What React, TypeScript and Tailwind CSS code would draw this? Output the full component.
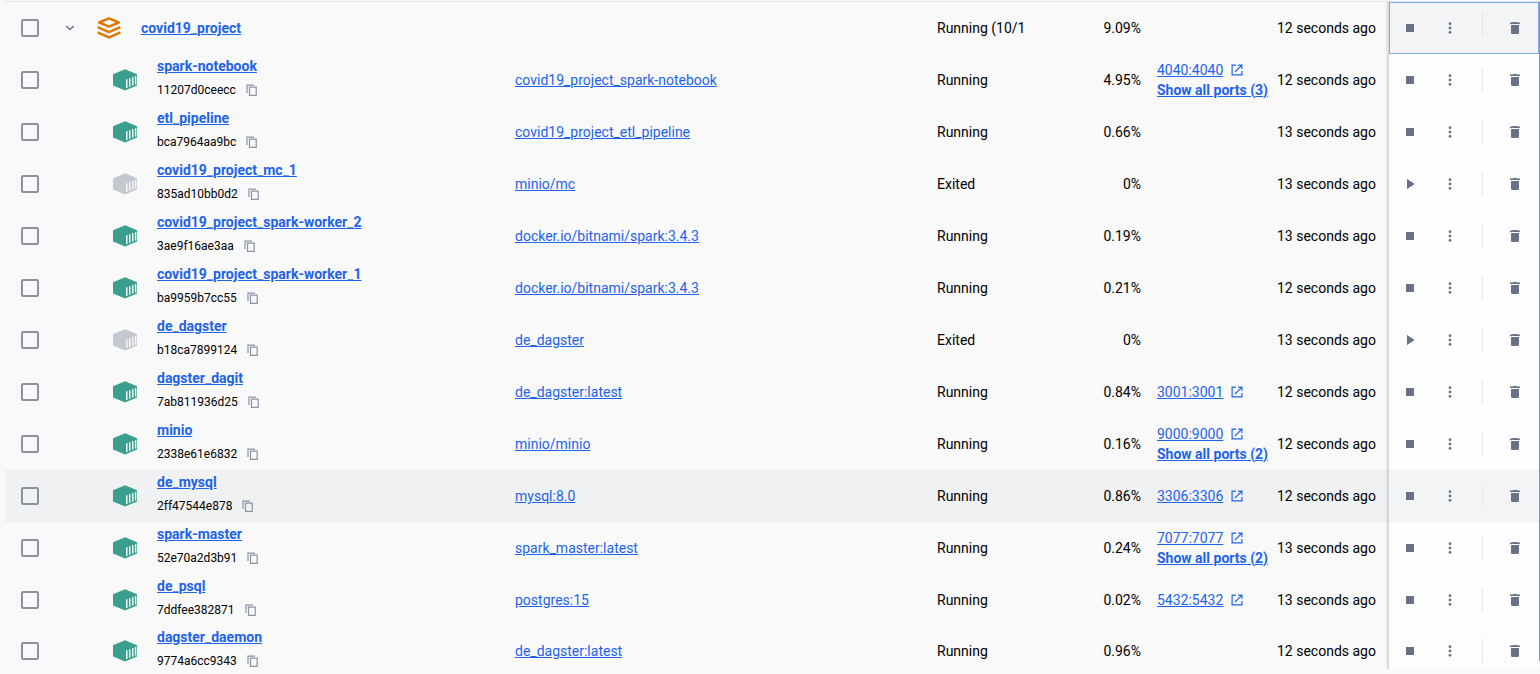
import React from "react";

type Row = {
  name: string;
  id: string;
  image: string;
  status: "Running" | "Exited";
  cpu: string;
  port?: string;
  more?: number;
  started: string;
  active?: boolean;
};

const rows: Row[] = [
  { name: "spark-notebook", id: "11207d0ceecc", image: "covid19_project_spark-notebook", status: "Running", cpu: "4.95%", port: "4040:4040", more: 3, started: "12 seconds ago" },
  { name: "etl_pipeline", id: "bca7964aa9bc", image: "covid19_project_etl_pipeline", status: "Running", cpu: "0.66%", started: "13 seconds ago" },
  { name: "covid19_project_mc_1", id: "835ad10bb0d2", image: "minio/mc", status: "Exited", cpu: "0%", started: "13 seconds ago" },
  { name: "covid19_project_spark-worker_2", id: "3ae9f16ae3aa", image: "docker.io/bitnami/spark:3.4.3", status: "Running", cpu: "0.19%", started: "13 seconds ago" },
  { name: "covid19_project_spark-worker_1", id: "ba9959b7cc55", image: "docker.io/bitnami/spark:3.4.3", status: "Running", cpu: "0.21%", started: "12 seconds ago" },
  { name: "de_dagster", id: "b18ca7899124", image: "de_dagster", status: "Exited", cpu: "0%", started: "13 seconds ago" },
  { name: "dagster_dagit", id: "7ab811936d25", image: "de_dagster:latest", status: "Running", cpu: "0.84%", port: "3001:3001", started: "12 seconds ago" },
  { name: "minio", id: "2338e61e6832", image: "minio/minio", status: "Running", cpu: "0.16%", port: "9000:9000", more: 2, started: "12 seconds ago" },
  { name: "de_mysql", id: "2ff47544e878", image: "mysql:8.0", status: "Running", cpu: "0.86%", port: "3306:3306", started: "12 seconds ago", active: true },
  { name: "spark-master", id: "52e70a2d3b91", image: "spark_master:latest", status: "Running", cpu: "0.24%", port: "7077:7077", more: 2, started: "13 seconds ago" },
  { name: "de_psql", id: "7ddfee382871", image: "postgres:15", status: "Running", cpu: "0.02%", port: "5432:5432", started: "13 seconds ago" },
  { name: "dagster_daemon", id: "9774a6cc9343", image: "de_dagster:latest", status: "Running", cpu: "0.96%", started: "12 seconds ago" },
];

function StackIcon() {
  return (
    <svg width="24" height="24" viewBox="0 0 24 24" fill="none" stroke="#dd7a05" strokeWidth="2.5" strokeLinejoin="round" className="shrink-0">
      <path d="M12 2.3 21.8 6.5 12 10.7 2.2 6.5Z" />
      <path d="M.6 11.2 12 16.1 23.4 11.2" />
      <path d="M.6 16.4 12 21.4 23.4 16.4" />
    </svg>
  );
}

function ContainerIcon({ running }: { running: boolean }) {
  return (
    <svg width="24" height="24" viewBox="0 0 24 24" className="shrink-0">
      <path d="M12 1.2 24 6.2V17.6L12 22.6 0 17.6V6.2Z" fill={running ? "#3aa08d" : "#c4c8d1"} />
      <path d="M13.8 11.2V20M16.8 10.2V18.8M19.8 9.1V17.6M22.6 8V16.4" stroke="#f9f9fa" strokeWidth="1.4" />
    </svg>
  );
}

function CopyIcon() {
  return (
    <svg width="12" height="12" viewBox="0 0 12 12" fill="none" stroke="#8993a5" strokeWidth="1.2">
      <path d="M1 9V1.2H8" />
      <path d="M3.5 3.2H10.2V11.4H3.5Z" />
    </svg>
  );
}

function OpenIcon() {
  return (
    <svg width="12" height="12" viewBox="0 0 12 12" fill="none" stroke="#1d63ed" strokeWidth="1.2" className="shrink-0">
      <path d="M5 1.1H1.1V10.9H10.9V7" />
      <path d="M7 1.1H10.9V5M10.6 1.4 4 8" />
    </svg>
  );
}

function Actions({ name, running, group }: { name: string; running: boolean; group?: boolean }) {
  const button = "flex size-8 items-center justify-center";
  return (
    <div className="flex h-8 items-center gap-2 pl-[5px]">
      <button type="button" aria-label={(running ? "Stop " : "Start ") + name} className={button}>
        <svg width="8" height="10" viewBox="0 0 8 10" fill="#677285">
          {running ? <path d="M0 1H8V9H0Z" /> : <path d="M1 0 8.6 5 1 10Z" />}
        </svg>
      </button>
      <button type="button" aria-label={"More actions for " + name} className={button}>
        <svg width="4" height="12" viewBox="0 0 4 12" fill="#677285">
          <circle cx="2" cy="1.7" r="1.4" />
          <circle cx="2" cy="6" r="1.4" />
          <circle cx="2" cy="10.3" r="1.4" />
        </svg>
      </button>
      <span className={group ? "mx-2 h-6 w-px self-start bg-[#e1e3e6]" : "mx-2 h-6 w-px bg-[#e7e8eb]"} />
      <button type="button" aria-label={"Delete " + name} className={button}>
        <svg width="10" height="12" viewBox="0 0 10 12" fill="#677285">
          <path d="M3 0H7L7.6.6H10V2H0V.6H2.4ZM1 3H9V10.8Q9 12 7.8 12H2.2Q1 12 1 10.8Z" />
        </svg>
      </button>
    </div>
  );
}

function Check({ name }: { name: string }) {
  return (
    <input
      type="checkbox"
      aria-label={"Select " + name}
      className="mx-auto block size-[18px] appearance-none rounded-xs border-2 border-[#8993a5] checked:bg-[#8993a5]"
    />
  );
}

const pinned =
  "relative p-0 before:absolute before:inset-y-0 before:right-full before:w-1 before:bg-linear-to-l before:from-black/15 before:to-transparent ";

export default function App() {
  return (
    <div className="h-screen overflow-hidden bg-[#f9f9fa] pt-px pb-[5px] pl-[5px] font-['Roboto',sans-serif] text-sm leading-5 text-black">
      <div className="flex h-full overflow-hidden border-t border-[#e1e2e4]">
        <table className="w-full table-fixed border-collapse">
          <colgroup>
            <col className="w-[50px]" />
            <col className="w-[30px]" />
            <col />
            <col />
            <col className="w-[100px]" />
            <col className="w-[120px]" />
            <col className="w-[120px]" />
            <col className="w-[120px]" />
            <col className="w-[150px]" />
          </colgroup>
          <tbody>
            <tr className="h-[52px]">
              <td className="p-0"><Check name="covid19_project" /></td>
              <td className="p-0">
                <button type="button" aria-label="Collapse covid19_project" className="mx-auto flex size-6 items-center justify-center">
                  <svg width="10" height="6" viewBox="0 0 10 6" fill="none" stroke="#677285" strokeWidth="1.4">
                    <path d="M1.2 1 5 4.6 8.8 1" />
                  </svg>
                </button>
              </td>
              <td className="p-0 pl-3">
                <div className="flex items-center gap-5">
                  <StackIcon />
                  <a href="#" className="font-bold text-[#1d63ed] underline">covid19_project</a>
                </div>
              </td>
              <td className="p-0" />
              <td className="p-0 pl-2 whitespace-nowrap">Running (10/1</td>
              <td className="p-0 pr-2 text-right">9.09%</td>
              <td className="p-0" />
              <td className="p-0 pl-2 whitespace-nowrap">12 seconds ago</td>
              <td className={pinned + "bg-[#f3f4f6] outline-1 -outline-offset-1 outline-[#84a9f0]"}>
                <Actions name="covid19_project" running group />
              </td>
            </tr>
            {rows.map((r) => {
              const running = r.status === "Running";
              return (
                <tr key={r.id} className={r.active ? "h-[52px] bg-[#f0f1f3]" : "h-[52px] last:h-[50px]"}>
                  <td className="p-0"><Check name={r.name} /></td>
                  <td className="p-0" />
                  <td className="p-0 pl-7">
                    <div className="flex items-center gap-5">
                      <ContainerIcon running={running} />
                      <div className="flex flex-col gap-1 pb-1">
                        <a href="#" className="font-bold whitespace-nowrap text-[#1d63ed] underline">{r.name}</a>
                        <div className="flex items-center gap-2.5 text-xs leading-5">
                          {r.id}
                          <button type="button" aria-label={"Copy id of " + r.name}><CopyIcon /></button>
                        </div>
                      </div>
                    </div>
                  </td>
                  <td className="truncate p-0 pl-2">
                    <a href="#" className="text-[#1d63ed] underline">{r.image}</a>
                  </td>
                  <td className="p-0 pl-2">{r.status}</td>
                  <td className="p-0 pr-2 text-right">{r.cpu}</td>
                  <td className="p-0 pl-2 whitespace-nowrap text-[#1d63ed]">
                    {r.port && (
                      <a href="#" className="flex items-center gap-2">
                        <span className="underline">{r.port}</span>
                        <OpenIcon />
                      </a>
                    )}
                    {r.more && <a href="#" className="block font-bold underline">Show all ports ({r.more})</a>}
                  </td>
                  <td className="p-0 pl-2 whitespace-nowrap">{r.started}</td>
                  <td className={pinned + (r.active ? "bg-[#f3f4f6]" : "bg-[#fdfdfd]")}>
                    <Actions name={r.name} running={running} />
                  </td>
                </tr>
              );
            })}
          </tbody>
        </table>
        <div className="mb-2 w-px shrink-0 bg-[#8993a5]" />
      </div>
    </div>
  );
}
